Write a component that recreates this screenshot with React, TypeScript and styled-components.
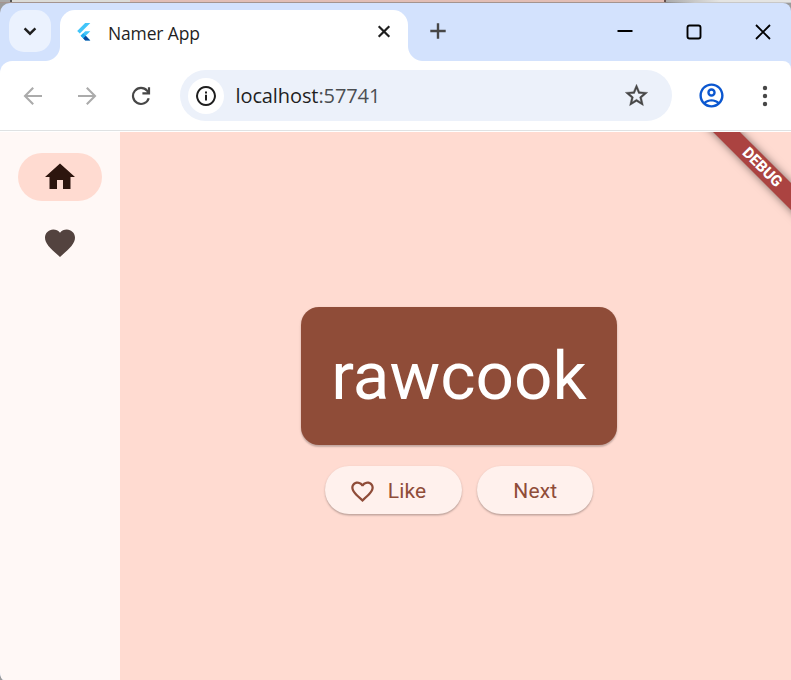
import React from "react";
import styled, { createGlobalStyle } from "styled-components";

const GlobalStyle = createGlobalStyle`
  * { box-sizing: border-box; }
  html, body { margin: 0; padding: 0; overflow: hidden; }
  button { border: 0; margin: 0; padding: 0; background: none; font: inherit; color: inherit; }
  svg { display: block; flex: none; }
`;

const Desktop = styled.div`
  width: 791px;
  height: 680px;
  padding-top: 3px;
  overflow: hidden;
  background:
    linear-gradient(#a4948f, #a4948f) 0 2px / 665px 1px no-repeat,
    linear-gradient(90deg, #8b8b8b, #c8c8c8 30px) 665px 2px / 126px 1px no-repeat,
    linear-gradient(90deg, #a8a8a8 0 10px, #555 10px 12px, #dcdcd8 12px 130px, #e2beb5 130px 664px, #66504c 664px 666px, #aaa 666px, #e4e4e2 720px) 0 0 / 791px 3px no-repeat,
    #9b9b9b;
`;

const BrowserWindow = styled.div`
  display: flex;
  flex-direction: column;
  height: 677px;
  border-radius: 10px 8px 0 4px / 10px 8px 0 8px;
  overflow: hidden;
  background: #d3e2fd;
`;

const TabStrip = styled.header`
  display: flex;
  height: 58px;
  padding: 7px 0 0 9px;
`;

const TabSearch = styled.button`
  display: grid;
  place-items: center;
  width: 42px;
  height: 42px;
  border-radius: 15px;
  background: #ebf2fe;
`;

const Tab = styled.div`
  position: relative;
  display: flex;
  align-items: center;
  width: 348px;
  height: 51px;
  margin-left: 9px;
  padding: 0 16px 8px 15px;
  border-radius: 15px 15px 0 0;
  background: #fff;

  &::before,
  &::after {
    content: "";
    position: absolute;
    bottom: 0;
    width: 15px;
    height: 15px;
  }
  &::before {
    left: -15px;
    background: radial-gradient(circle at 0 0, transparent 14.5px, #fff 15.5px);
  }
  &::after {
    right: -15px;
    background: radial-gradient(circle at 100% 0, transparent 14.5px, #fff 15.5px);
  }
`;

const TabTitle = styled.span`
  flex: 1;
  margin-left: 15px;
  padding-top: 2px;
  font: 17.5px "Open Sans", "Noto Sans", sans-serif;
  letter-spacing: -0.15px;
  color: #1f1f1f;
`;

const NewTab = styled.button`
  display: grid;
  place-items: center;
  width: 42px;
  height: 42px;
  margin-left: 9px;
`;

const WindowControls = styled.div`
  display: flex;
  flex: none;
  margin: 0 -6.5px 0 auto;
`;

const Control = styled.button`
  display: grid;
  place-items: center;
  width: 69px;
  height: 44px;
`;

const Toolbar = styled.nav`
  display: flex;
  align-items: center;
  height: 71px;
  padding: 0 0 2px 6px;
  border-radius: 12px 8px 0 0;
  background: linear-gradient(#dfe2e3, #dfe2e3) 0 69px / 100% 1px no-repeat #fff;
`;

const ToolButton = styled.button`
  display: grid;
  flex: none;
  place-items: center;
  width: 54px;
  height: 51px;
`;

const AddressBar = styled.div`
  display: flex;
  flex: none;
  align-items: center;
  width: 492px;
  height: 51px;
  margin: 0 12px;
  padding: 0 22.5px 0 8px;
  border-radius: 26px;
  background: #ecf1fa;
`;

const SiteInfo = styled.span`
  display: grid;
  place-items: center;
  width: 36px;
  height: 36px;
  border-radius: 50%;
  background: #fff;
`;

const Url = styled.span`
  flex: 1;
  margin-left: 11.5px;
  font: 20px "Open Sans", "Noto Sans", sans-serif;
  letter-spacing: -0.1px;
  color: #1f1f1f;
`;

const Port = styled.span`
  color: #4b4e52;
`;

const Page = styled.div`
  display: flex;
  flex: 1;
  min-height: 0;
  font-family: Roboto, sans-serif;
`;

const Rail = styled.aside`
  display: flex;
  flex-direction: column;
  align-items: center;
  gap: 18px;
  width: 120px;
  padding-top: 21px;
  background: #fff8f6;
`;

const RailItem = styled.button<{ $selected?: boolean }>`
  display: grid;
  place-items: center;
  width: 84px;
  height: 48px;
  border-radius: 24px;
  background: ${(p) => (p.$selected ? "#ffdbd1" : "transparent")};
`;

const Main = styled.main`
  position: relative;
  display: flex;
  flex: 1;
  flex-direction: column;
  align-items: center;
  padding: 175px 0 0 7px;
  overflow: hidden;
  background: #ffdbd1;
`;

const WordCard = styled.div`
  display: flex;
  align-items: center;
  justify-content: center;
  width: 316px;
  height: 138px;
  border-radius: 18px;
  background: #8f4c38;
  color: #fff;
  font-size: 67.5px;
  line-height: 78px;
  box-shadow: 0 1.5px 1.5px rgba(0, 0, 0, 0.16), 0 1px 3px rgba(0, 0, 0, 0.12);
`;

const Actions = styled.div`
  display: flex;
  gap: 15px;
  margin-top: 21px;
`;

const PillButton = styled.button<{ $leading?: boolean }>`
  display: flex;
  align-items: center;
  gap: 12px;
  height: 48px;
  padding: ${(p) => (p.$leading ? "2px 36px 0 24px" : "2px 36px 0")};
  border-radius: 24px;
  background: #fff1ed;
  color: #8f4c38;
  font-size: 21px;
  letter-spacing: 0.15px;
  box-shadow: 0 1.5px 1.5px rgba(0, 0, 0, 0.17), 0 1px 3px rgba(0, 0, 0, 0.12);
`;

const DebugRibbon = styled.div`
  position: absolute;
  top: 26px;
  right: -60.5px;
  width: 180px;
  height: 19px;
  transform: rotate(45deg);
  background: #ab4341;
  box-shadow: 0 0 9px rgba(0, 0, 0, 0.5);
  color: #fff;
  font-size: 15.3px;
  font-weight: 800;
  line-height: 19px;
  text-align: center;
`;

const HEART =
  "M12 21.35l-1.45-1.32C5.4 15.36 2 12.28 2 8.5 2 5.42 4.42 3 7.5 3c1.74 0 3.41.81 4.5 2.09C13.09 3.81 14.76 3 16.5 3 19.58 3 22 5.42 22 8.5c0 3.78-3.4 6.86-8.55 11.54L12 21.35z";
const HEART_OUTLINE =
  "M16.5 3c-1.74 0-3.41.81-4.5 2.09C10.91 3.81 9.24 3 7.5 3 4.42 3 2 5.42 2 8.5c0 3.78 3.4 6.86 8.55 11.54L12 21.35l1.45-1.32C18.6 15.36 22 12.28 22 8.5 22 5.42 19.58 3 16.5 3zm-4.4 15.55l-.1.1-.1-.1C7.14 14.24 4 11.39 4 8.5 4 6.5 5.5 5 7.5 5c1.54 0 3.04.99 3.57 2.36h1.87C13.46 5.99 14.96 5 16.5 5c2 0 3.5 1.5 3.5 3.5 0 2.89-3.14 5.74-7.9 10.05z";
const STAR =
  "M22 9.24l-7.19-.62L12 2 9.19 8.63 2 9.24l5.46 4.73L5.82 21 12 17.27 18.18 21l-1.63-7.03L22 9.24zM12 15.4l-3.76 2.27 1-4.28-3.32-2.88 4.38-.38L12 6.1l1.71 4.04 4.38.38-3.32 2.88 1 4.28L12 15.4z";
const ACCOUNT =
  "M12 2C6.48 2 2 6.48 2 12s4.48 10 10 10 10-4.48 10-10S17.52 2 12 2zM7.35 18.5C8.66 17.56 10.26 17 12 17s3.34.56 4.65 1.5c-1.31.94-2.91 1.5-4.65 1.5s-3.34-.56-4.65-1.5zm10.79-1.38C16.45 15.8 14.32 15 12 15s-4.45.8-6.14 2.12C4.7 15.73 4 13.95 4 12c0-4.42 3.58-8 8-8s8 3.58 8 8c0 1.95-.7 3.73-1.86 5.12zM12 6c-1.93 0-3.5 1.57-3.5 3.5S10.07 13 12 13s3.5-1.57 3.5-3.5S13.93 6 12 6zm0 5c-.83 0-1.5-.67-1.5-1.5S11.17 8 12 8s1.5.67 1.5 1.5S12.83 11 12 11z";

interface GlyphProps {
  d: string;
  size: number;
  color: string;
  outline?: number;
}

const Glyph = ({ d, size, color, outline = 0 }: GlyphProps) => (
  <svg width={size} height={size} viewBox="0 0 24 24" fill={color} stroke={color} strokeWidth={outline}>
    <path d={d} />
  </svg>
);

interface StrokeGlyphProps {
  d: string;
  size: number;
  color: string;
  weight: number;
}

const StrokeGlyph = ({ d, size, color, weight }: StrokeGlyphProps) => (
  <svg width={size} height={size} viewBox={`0 0 ${size} ${size}`} fill="none" stroke={color} strokeWidth={weight}>
    <path d={d} />
  </svg>
);

const FlutterLogo = () => (
  <svg width="18" height="20" viewBox="0 0 18 20">
    <path d="M10.2 1H15.3L4.8 11.5L2.2 9Z" fill="#42c5f9" />
    <path d="M10.2 9.2H15.3L10.7 13.8L15.3 18.5H10.2L5.6 13.8Z" fill="#42c5f9" />
    <path d="M8.1 16.3L10.7 13.8L15.3 18.5H10.2Z" fill="#07479b" />
    <path d="M5.6 13.8L8.1 11.3L10.7 13.8L8.1 16.3Z" fill="#22a9ee" />
  </svg>
);

export default function App() {
  return (
    <>
      <GlobalStyle />
      <Desktop>
        <BrowserWindow>
          <TabStrip>
            <TabSearch aria-label="Search tabs">
              <StrokeGlyph size={20} d="M4.6 7.3L10 12.7L15.4 7.3" color="#1f1f1f" weight={2.4} />
            </TabSearch>
            <Tab>
              <FlutterLogo />
              <TabTitle>Namer App</TabTitle>
              <StrokeGlyph size={16} d="M2.7 2.2L13.3 12.8M13.3 2.2L2.7 12.8" color="#1f1f1f" weight={2.2} />
            </Tab>
            <NewTab aria-label="New tab">
              <StrokeGlyph size={18} d="M9 1.3V16.7M1.3 9H16.7" color="#474747" weight={2.4} />
            </NewTab>
            <WindowControls>
              <Control aria-label="Minimize">
                <StrokeGlyph size={16} d="M0.5 7H15.5" color="#000" weight={2} />
              </Control>
              <Control aria-label="Maximize">
                <StrokeGlyph
                  size={16}
                  d="M3.5 1.5H12.5Q14.5 1.5 14.5 3.5V12.5Q14.5 14.5 12.5 14.5H3.5Q1.5 14.5 1.5 12.5V3.5Q1.5 1.5 3.5 1.5Z"
                  color="#000"
                  weight={1.9}
                />
              </Control>
              <Control aria-label="Close">
                <StrokeGlyph size={16} d="M1 1L15 15M15 1L1 15" color="#000" weight={1.8} />
              </Control>
            </WindowControls>
          </TabStrip>
          <Toolbar>
            <ToolButton aria-label="Back">
              <StrokeGlyph size={20} d="M19 10H2.5M10.2 1.7L2 10L10.2 18.3" color="#ababab" weight={2.1} />
            </ToolButton>
            <ToolButton aria-label="Forward">
              <StrokeGlyph size={20} d="M1 10H17.5M9.8 1.7L18 10L9.8 18.3" color="#ababab" weight={2.1} />
            </ToolButton>
            <ToolButton aria-label="Reload">
              <StrokeGlyph
                size={20}
                d="M17.7 12.2A8 8 0 1 1 16.2 4.9L18 7M18 1.2V7.4H11.4"
                color="#474747"
                weight={2.2}
              />
            </ToolButton>
            <AddressBar>
              <SiteInfo>
                <StrokeGlyph
                  size={22}
                  d="M11 2.1A8.9 8.9 0 1 1 10.99 2.1ZM11 9.7V15.5M11 6.4V8.4"
                  color="#1f1f1f"
                  weight={2}
                />
              </SiteInfo>
              <Url>
                localhost<Port>:57741</Port>
              </Url>
              <Glyph d={STAR} size={27} color="#474747" outline={0.3} />
            </AddressBar>
            <ToolButton aria-label="Profile">
              <Glyph d={ACCOUNT} size={29} color="#0b57d0" />
            </ToolButton>
            <ToolButton aria-label="Menu">
              <svg width="6" height="22" fill="#474747">
                <circle cx="3" cy="3" r="2.2" />
                <circle cx="3" cy="11" r="2.2" />
                <circle cx="3" cy="19" r="2.2" />
              </svg>
            </ToolButton>
          </Toolbar>
          <Page>
            <Rail>
              <RailItem $selected aria-label="Home">
                <Glyph d="M10 20v-6h4v6h5v-8h3L12 3 2 12h3v8z" size={36} color="#2d150e" />
              </RailItem>
              <RailItem aria-label="Favorites">
                <Glyph d={HEART} size={36} color="#53433f" />
              </RailItem>
            </Rail>
            <Main>
              <WordCard>rawcook</WordCard>
              <Actions>
                <PillButton $leading>
                  <Glyph d={HEART_OUTLINE} size={27} color="#8f4c38" />
                  Like
                </PillButton>
                <PillButton>Next</PillButton>
              </Actions>
              <DebugRibbon>DEBUG</DebugRibbon>
            </Main>
          </Page>
        </BrowserWindow>
      </Desktop>
    </>
  );
}
